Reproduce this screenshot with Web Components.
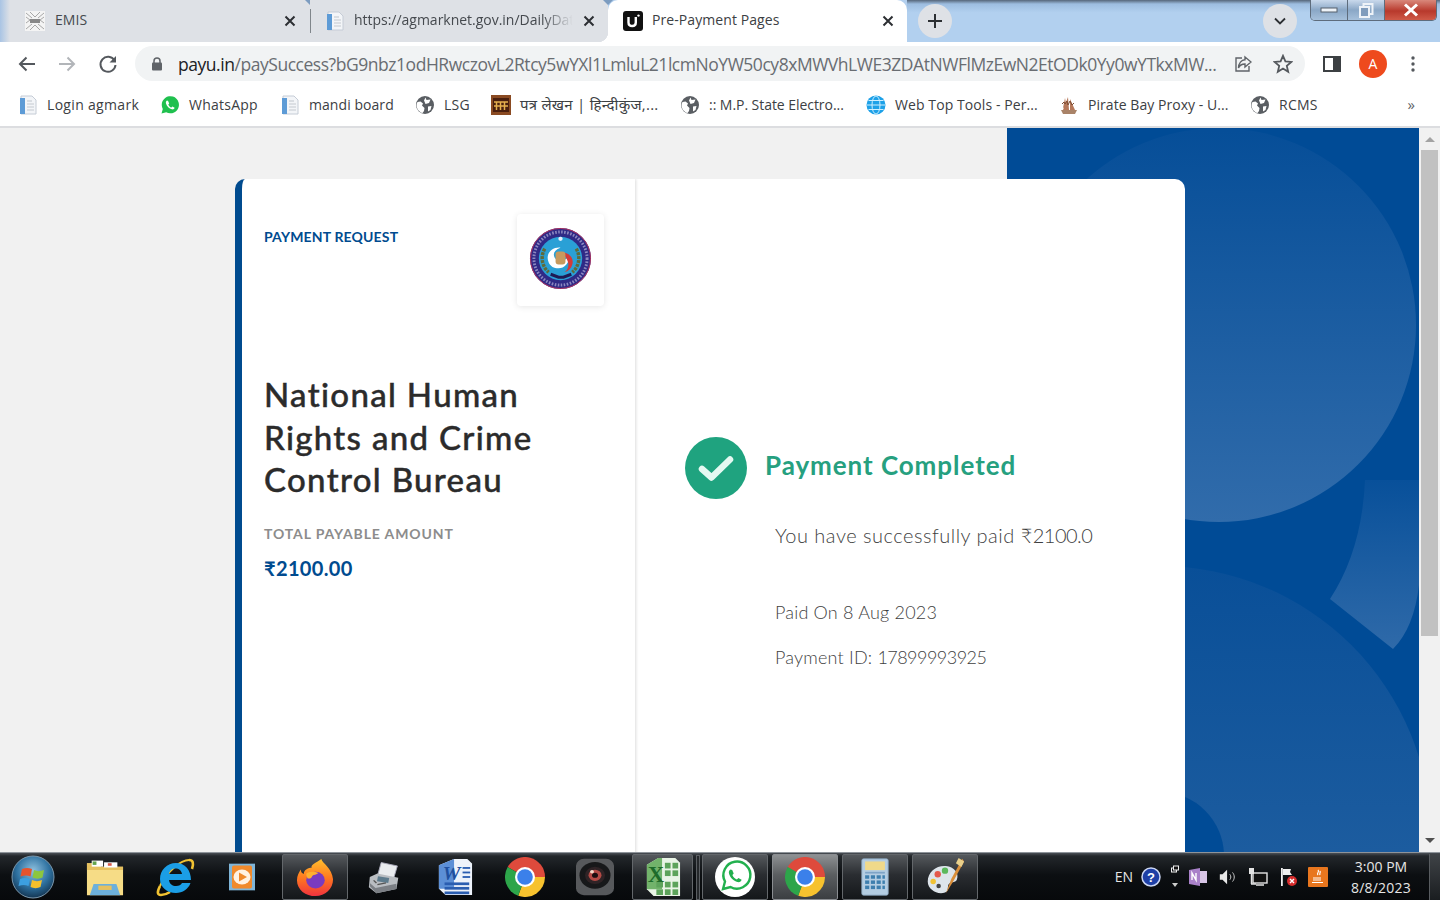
<!DOCTYPE html>
<html lang="en"><head><meta charset="utf-8"><title>Pre-Payment Pages</title>
<style>
html,body{margin:0;padding:0;width:1440px;height:900px;overflow:hidden;background:#fff}
body{display:flex;flex-direction:column;font-family:"Open Sans","Noto Sans",sans-serif}
</style></head><body>
<tab-strip>
  <browser-tab icon="emis" style="width:310px">EMIS</browser-tab>
  <browser-tab icon="doc" sep fade style="width:298px">https://agmarknet.gov.in/DailyData</browser-tab>
  <browser-tab icon="payu" active style="width:299px">Pre-Payment Pages</browser-tab>
</tab-strip>
<nav-bar url-host="payu.in" url-rest="/paySuccess?bG9nbz1odHRwczovL2Rtcy5wYXl1LmluL21lcmNoYW50cy8xMWVhLWE3ZDAtNWFlMzEwN2EtODk0Yy0wYTkxMW..."></nav-bar>
<bookmark-bar>
  <book-mark icon="doc" w="142" style="letter-spacing:.32px">Login agmark</book-mark>
  <book-mark icon="wa" w="120">WhatsApp</book-mark>
  <book-mark icon="doc" w="135" style="letter-spacing:.06px">mandi board</book-mark>
  <book-mark icon="globe" w="76">LSG</book-mark>
  <book-mark icon="hindi" w="189" big>पत्र लेखन | हिन्दीकुंज,...</book-mark>
  <book-mark icon="globe" w="186" style="letter-spacing:-.05px">:: M.P. State Electro...</book-mark>
  <book-mark icon="ball" w="193" style="letter-spacing:.09px">Web Top Tools - Per...</book-mark>
  <book-mark icon="ship" w="191" style="letter-spacing:.05px">Pirate Bay Proxy - U...</book-mark>
  <book-mark icon="globe" w="90">RCMS</book-mark>
</bookmark-bar>
<page-view>
  <pay-card>
    <summary-panel slot="left" merchant="National Human Rights and Crime Control Bureau" amount="₹2100.00"></summary-panel>
    <status-panel slot="right" paid="2100.0" date="8 Aug 2023" pid="17899993925"></status-panel>
  </pay-card>
</page-view>
<task-bar></task-bar>
<script>
const ICONS={
emis:`<svg viewBox="0 0 20 20"><rect width="20" height="20" fill="#f4f4f4"/><path d="M1 2l6 5M19 2l-6 5M1 18l6-5M19 18l-6-5M1 6l4 3-4 3M19 6l-4 3 4 3M5 1l5 5 5-5M5 19l5-5 5 5" stroke="#a8a8a8" fill="none" stroke-width="1"/><rect x="5" y="8" width="10" height="4" fill="#888"/></svg>`,
doc:`<svg viewBox="0 0 20 20"><path d="M3 1h11l4 4v14H3z" fill="#f3f5f8" stroke="#c5ccd6"/><rect x="2" y="3" width="5" height="16" fill="#5d9bd6"/><path d="M9 9h7M9 12h7M9 15h7" stroke="#c4c9cf"/><rect x="9" y="5" width="5" height="2" fill="#d9dde2"/></svg>`,
payu:`<svg viewBox="0 0 20 20"><rect width="20" height="20" rx="3" fill="#111"/><path d="M5.500 6v5.500c0 2.500 1.600 3.500 3.800 3.500s3.500-1 3.500-3.500V6" fill="none" stroke="#fff" stroke-width="2.400"/><circle cx="15.500" cy="4.600" r="1.200" fill="#fff"/></svg>`,
wa:`<svg viewBox="0 0 20 20"><path d="M1.500 18.500l1.300-4.600A8.600 8.600 0 1 1 6.200 17.300z" fill="#1fc04e"/><path d="M7 5.600c-.9.400-1.400 1.600-1 3 .8 2.800 3.200 5 5.800 5.700 1.500.4 2.500-.4 2.800-1.500l-2.200-1.300-1 1c-1.300-.4-2.600-1.700-3.100-3.100l.9-1-1.100-2.400z" fill="#fff"/></svg>`,
globe:`<svg viewBox="0 0 20 20"><circle cx="10" cy="10" r="9" fill="#5a5e63"/><path d="M2.500 7l3-.5 2.500 2-1 2 2.500 2.500-.5 3-1.500 2C4.500 17.500 1.500 14 1.500 10c0-1 .4-2 1-3zM10.500 2.500l1 2.500 4-.5-1.500 3.500-3.500 1L9 5.500zM13 11.500l3.500-.5-1 4-2.500 1.500z" fill="#fff"/></svg>`,
hindi:`<svg viewBox="0 0 20 20"><rect width="20" height="20" fill="#8a4a22"/><rect x="2" y="3" width="16" height="14" fill="#4a1f0e"/><path d="M3 7h14M5.500 7v8M9.500 7v8M13.500 7v8M3 11h14" stroke="#e6b04e" stroke-width="1.500"/></svg>`,
ball:`<svg viewBox="0 0 20 20"><circle cx="10" cy="10" r="9.500" fill="#1da1e8"/><g fill="none" stroke="#cfefff"><ellipse cx="10" cy="10" rx="4" ry="9"/><path d="M1 10h18M2.500 5.500h15M2.500 14.500h15"/></g></svg>`,
ship:`<svg viewBox="0 0 20 20"><path d="M2 15h16l-2 4H4z" fill="#a98368"/><path d="M9 2l1 13H4zM11 4l5 11h-5zM6 3l1.500 8L4 13z" fill="#b6785a"/><path d="M3 9l2-2 1 2 2-3 1 4 2-4 2 4 2-2" stroke="#7f4d33" fill="none"/></svg>`,
chrome:`<svg viewBox="0 0 40 40"><path d="M20 20L2.680 10A20 20 0 0 1 40 20z" fill="#de4a3c"/><path d="M20 20H40A20 20 0 0 1 13.160 38.800z" fill="#f7c22e"/><path d="M20 20L13.160 38.800A20 20 0 0 1 2.680 10z" fill="#2da54a"/><circle cx="20" cy="20" r="10" fill="#fff"/><circle cx="20" cy="20" r="7.800" fill="#3b80ea"/></svg>`,
folder:`<svg viewBox="0 0 40 44" preserveAspectRatio="none"><path d="M1 6h12l3 4h23v33H1z" fill="#f6dc86"/><path d="M1 6h12l3 4h23v4H1z" fill="#e6c15f"/><rect x="6" y="3" width="12" height="7" fill="#fff"/><rect x="19" y="5" width="14" height="6" fill="#fff"/><rect x="7" y="4" width="4" height="4" fill="#63a24c"/><rect x="23" y="6" width="4" height="3" fill="#d65a4a"/><path d="M8 30h24l4 13H4z" fill="#6cb0dc"/><rect x="13" y="32" width="14" height="5" fill="#e6c15f"/></svg>`,
ie:`<svg viewBox="0 0 40 40"><path d="M34 3c4 0 5 3 3 9M5 29c-3 6-3 9 1 9 3 0 6-1 9-3" fill="none" stroke="#f1c232" stroke-width="2.600"/><path d="M34 3C26 3 12 14 5 29" fill="none" stroke="#f1c232" stroke-width="2"/><path d="M5 22C5 13 12 6 21 6s15 7 15 17H14c.5 4 3.500 6 7 6 3 0 5-1 6-3h8.500c-2 6-8 10-14.500 10C12 36 5 30 5 22zM14 17h13c-.5-3.500-3-5.500-6.500-5.500S14.500 13.500 14 17z" fill="#1b9ee6" fill-rule="evenodd"/></svg>`,
media:`<svg viewBox="0 0 32 36" preserveAspectRatio="none"><path d="M3 3l5 3v24l-5 3z" fill="#5a9ecb"/><path d="M29 3l-5 3v24l5 3z" fill="#5a9ecb"/><rect x="3" y="3" width="26" height="30" fill="#7fb5d8"/><rect x="6" y="5" width="20" height="26" rx="2" fill="#f08a2c"/><circle cx="16" cy="18" r="8.500" fill="#fff2e3"/><path d="M13 13l8 5-8 5z" fill="#f08a2c"/></svg>`,
firefox:`<svg viewBox="0 0 40 44" preserveAspectRatio="none"><defs><linearGradient id="ff" x1="0" y1="0" x2="0" y2="1"><stop offset="0" stop-color="#ffc02e"/><stop offset=".5" stop-color="#ff7a1f"/><stop offset="1" stop-color="#f0323f"/></linearGradient></defs><path d="M26 1c1 5 11 10 12 23 0 11-8 19-18 19S1 36 1 25c0-5 2-9 4-12 0 3 1 4 3 5 0-5 5-7 8-7-1-4 5-6 10-10z" fill="url(#ff)"/><circle cx="20" cy="25" r="9.500" fill="#7a3bc0"/><path d="M11 17c4-2 8-2 12 0-2 2-5 2-6 3s-1 4-5 3c-1-2-2-4-1-6z" fill="#ffb02e"/></svg>`,
fax:`<svg viewBox="0 0 40 40" preserveAspectRatio="none"><path d="M16 3l17 4-4 15-17-3z" fill="#e9ecef" stroke="#aab"/><path d="M4 20l8-4 22 5-2 13-21 5-8-7z" fill="#b9bdc2"/><path d="M4 31l7 8 21-5 0-6-22 5-6-6z" fill="#7b7f85"/><rect x="12" y="20" width="12" height="6" fill="#5d7b8d" transform="rotate(10 18 23)"/><path d="M8 24l3 3M12 29l9-2" stroke="#555" stroke-width="1.500"/></svg>`,
word:`<svg viewBox="0 0 38 42" preserveAspectRatio="none"><path d="M2 8L18 1h14l5 5v35H9L2 34z" fill="#edf2fa"/><path d="M2 8L18 1v33L2 34z" fill="#5c8fd6"/><rect x="8" y="27" width="26" height="3" fill="#2a5db0"/><rect x="8" y="32" width="26" height="3" fill="#2a5db0"/><rect x="8" y="37" width="26" height="3" fill="#2a5db0"/><rect x="27" y="10" width="8" height="2" fill="#2a5db0"/><rect x="27" y="15" width="8" height="2" fill="#2a5db0"/><rect x="27" y="20" width="8" height="2" fill="#2a5db0"/><text x="6" y="24" font-family="Liberation Serif" font-weight="700" font-style="italic" font-size="21" fill="#1f4f9f">W</text></svg>`,
camera:`<svg viewBox="0 0 40 44" preserveAspectRatio="none"><rect x="1" y="1" width="38" height="42" rx="8" fill="#57595c"/><circle cx="20" cy="20" r="15.500" fill="#17181a"/><circle cx="20" cy="20" r="10" fill="#2f2326"/><circle cx="20" cy="20" r="6.500" fill="#b34a45"/><circle cx="20" cy="20" r="3" fill="#1a0e10"/><circle cx="17" cy="16" r="2" fill="#f3d9c9"/></svg>`,
excel:`<svg viewBox="0 0 38 42"><path d="M2 8L14 1h18l5 5v35H9L2 34z" fill="#e9f4e6"/><path d="M2 8L14 1h4v33H2z" fill="#72b36b"/><g fill="#5da35b"><rect x="21" y="6" width="6" height="6"/><rect x="29" y="6" width="6" height="6"/><rect x="21" y="14" width="6" height="6"/><rect x="29" y="14" width="6" height="6"/><rect x="12" y="26" width="7" height="6"/><rect x="21" y="26" width="6" height="6"/><rect x="29" y="26" width="6" height="6"/><rect x="12" y="34" width="7" height="6"/><rect x="21" y="34" width="6" height="6"/><rect x="29" y="34" width="6" height="6"/></g><text x="3" y="26" font-family="Liberation Serif" font-weight="700" font-size="24" fill="#1d6b2a">X</text></svg>`,
whats:`<svg viewBox="0 0 40 40"><circle cx="20" cy="20" r="20" fill="#fff"/><path d="M8 32l2-7.500A13.500 13.500 0 1 1 15.500 30z" fill="none" stroke="#22b04e" stroke-width="2.400"/><path d="M15.500 12.500c-1.500.7-2 2.500-1.400 4.600 1.200 3.700 4.500 7 8.300 8 2.200.5 3.800-.6 4.200-2.300l-3.200-1.800-1.500 1.500c-1.900-.6-3.800-2.500-4.500-4.500l1.300-1.500-1.500-3.600z" fill="#22b04e"/></svg>`,
calc:`<svg viewBox="0 0 34 44" preserveAspectRatio="none"><rect x="1" y="1" width="32" height="42" rx="2" fill="#b4cde2" stroke="#8ba7bf"/><rect x="5" y="4" width="24" height="10" fill="#f0d98a"/><rect x="5" y="16" width="24" height="2" fill="#7fa4c6"/><g fill="#3e7fae"><rect x="5" y="20" width="5" height="4"/><rect x="12" y="20" width="5" height="4"/><rect x="19" y="20" width="5" height="4"/><rect x="26" y="20" width="3" height="4"/><rect x="5" y="26" width="5" height="4"/><rect x="12" y="26" width="5" height="4"/><rect x="19" y="26" width="5" height="4"/><rect x="26" y="26" width="3" height="4"/><rect x="5" y="32" width="5" height="4"/><rect x="12" y="32" width="5" height="4"/><rect x="19" y="32" width="5" height="4"/><rect x="26" y="32" width="3" height="4"/></g></svg>`,
paint:`<svg viewBox="0 0 44 44"><path d="M3 27C3 16 13 9 23 10c9 1 15 8 12 15-2 4-7 2-9 5-2 4 1 7-4 9-8 3-19-3-19-12z" fill="#dde4ea"/><circle cx="14" cy="19" r="3.500" fill="#e45a4c"/><circle cx="22" cy="15" r="3.500" fill="#5cb85c"/><circle cx="9" cy="27" r="3" fill="#f1c232"/><circle cx="15" cy="32" r="2.500" fill="#444"/><path d="M41 2L29 24l-6 16 8-13L43 5z" fill="#d98e3a"/><path d="M37 1l6 4-3 6-6-4z" fill="#e9d08b"/></svg>`,
orb:`<svg viewBox="0 0 44 44"><defs><radialGradient id="o" cx=".5" cy=".35" r=".7"><stop offset="0" stop-color="#8fc1df"/><stop offset=".55" stop-color="#2f72a1"/><stop offset="1" stop-color="#0e2a44"/></radialGradient></defs><circle cx="22" cy="22" r="21" fill="url(#o)" stroke="#7c98ad"/><path d="M11 14c3.500-1.500 6.500-1.500 10 0l-1.500 7.500c-3-1.500-6-1.500-10 0z" fill="#e5532d"/><path d="M23 15c3 1.500 6 1.500 10 0l-1.500 7.500c-3 1.500-7 1.500-10 0z" fill="#8cc63f"/><path d="M9 24c3-1.500 6-1.500 10 0l-1.500 7c-3-1.500-6-1.500-10 0z" fill="#3c9fe0"/><path d="M21 25c3 1.500 7 1.500 10 0l-1.500 7c-3 1.500-7 1.500-10 0z" fill="#f6c02c"/></svg>`,
help:`<svg viewBox="0 0 20 20"><circle cx="10" cy="10" r="9" fill="#1e3fa6" stroke="#cbd6f3" stroke-width="1.500"/><text x="10" y="15" text-anchor="middle" font-family="Liberation Sans" font-weight="700" font-size="13" fill="#fff">?</text></svg>`,
updown:`<svg viewBox="0 0 10 24"><rect x="1.500" y="3" width="5" height="4" fill="none" stroke="#eee"/><rect x="3.500" y="1" width="5" height="4" fill="#111" stroke="#eee"/><path d="M2 18h6l-3 4z" fill="#ccc"/></svg>`,
onenote:`<svg viewBox="0 0 20 20"><path d="M1 3l11-2v18L1 17z" fill="#a981c9"/><rect x="12" y="4" width="7" height="12" fill="#d8c5e6"/><path d="M4 13V6l4 7V6" stroke="#fff" fill="none" stroke-width="1.400"/></svg>`,
vol:`<svg viewBox="0 0 22 20"><path d="M2 7h3l5-5v16l-5-5H2z" fill="#e8e8e8"/><path d="M13 7c1.500 2 1.500 4 0 6M16 5c2.500 3 2.500 7 0 10" fill="none" stroke="#ddd"/></svg>`,
net:`<svg viewBox="0 0 20 20"><rect x="5" y="6" width="14" height="10" fill="#111" stroke="#e4e4e4" stroke-width="1.400"/><rect x="1" y="1" width="5" height="6" fill="#e4e4e4"/><path d="M3.500 7v10M8 18h8M3 17h5" stroke="#e4e4e4" stroke-width="1.500"/></svg>`,
flag:`<svg viewBox="0 0 20 20"><rect x="3" y="1" width="1.800" height="18" fill="#eee"/><path d="M5 2h8l-1 3 2 3H5z" fill="#eee"/><circle cx="14" cy="14" r="5" fill="#d62c2c"/><path d="M12 12l4 4M16 12l-4 4" stroke="#fff" stroke-width="1.400"/></svg>`,
java:`<svg viewBox="0 0 20 20"><rect width="20" height="20" rx="1" fill="#e8761e"/><path d="M10 3c2 2-2 3 0 5M12 4c1 2-1 2 0 4M5 11h8M5 13h8M4 15.500h11" stroke="#fff" fill="none" stroke-width="1.200"/></svg>`
};
function def(name,css,html,init){
  customElements.define(name,class extends HTMLElement{
    connectedCallback(){
      if(this.shadowRoot)return;
      const r=this.attachShadow({mode:'open'});
      r.innerHTML=`<style>${css}</style>`+(typeof html==='function'?html(this):html);
      if(init)init(this,r);
    }
  });
}
const X=`<svg width="12" height="12" viewBox="0 0 12 12"><path d="M1.500 1.500l9 9M10.500 1.500l-9 9" stroke="#2c2f33" stroke-width="2"/></svg>`;

def('tab-strip',`
:host{display:flex;height:42px;flex:none;position:relative;background:linear-gradient(90deg,#a7c8ea 0,#b4d0ee 60%,#a9c9ec 100%)}
.tabs{display:flex}
.rest{flex:1;display:flex;align-items:center;padding:0 0 0 11px;position:relative;background:linear-gradient(180deg,#56667a 0,#9dbde0 4px,#b2d0ef 30%)}
.c{width:34px;height:34px;border-radius:50%;background:#dee1e6;display:flex;align-items:center;justify-content:center;margin-top:-1px}
.sp{flex:1}
.dd{margin-right:13px}
win-controls{align-self:flex-start;margin-right:3px}
`,`<div class="tabs"><slot></slot></div><div class="rest">
<div class="c"><svg width="16" height="16" viewBox="0 0 16 16"><path d="M8 1v14M1 8h14" stroke="#2c2f33" stroke-width="2"/></svg></div>
<div class="sp"></div>
<div class="c dd"><svg width="12" height="8" viewBox="0 0 12 8"><path d="M1 1.500l5 5 5-5" stroke="#2c2f33" stroke-width="1.800" fill="none"/></svg></div>
<win-controls></win-controls></div>`);

def('win-controls',`
:host{display:flex;width:127px;height:21px;border:1px solid #5e6c7c;border-top:0;border-radius:0 0 5px 5px;overflow:hidden;box-sizing:border-box}
div{display:flex;align-items:center;justify-content:center;height:100%}
.a{width:36px;background:linear-gradient(#c9d9ec,#8aa7c6 50%,#a6c0db)}
.b{width:36px;background:linear-gradient(#c9d9ec,#8aa7c6 50%,#a6c0db);border-left:1px solid #5e6c7c;border-right:1px solid #5e6c7c}
.c{flex:1;background:linear-gradient(#d9887b,#b8392c 55%,#cf5a48)}
`,`<div class="a"><svg width="18" height="6"><rect x="1" y="1" width="16" height="4" fill="#eef3f8" stroke="#56606c"/></svg></div>
<div class="b"><svg width="16" height="15" viewBox="0 0 16 15"><rect x="5.500" y="1" width="9" height="10" fill="none" stroke="#eef3f8" stroke-width="2"/><rect x="2" y="4" width="9" height="10" fill="#7f9cbc" stroke="#eef3f8" stroke-width="2"/></svg></div>
<div class="c"><svg width="18" height="14" viewBox="0 0 18 14"><path d="M3 1.500l12 11M15 1.500l-12 11" stroke="#fff" stroke-width="3"/></svg></div>`);

def('browser-tab',`
:host{display:flex;align-items:center;height:42px;box-sizing:border-box;background:#dee1e6;position:relative;font-size:14px;color:#45494e;flex:none}
:host([active]){background:#fff;border-radius:10px 10px 0 0;color:#3c4043}
:host([active])::after{content:"";position:absolute;right:-10px;bottom:0;width:10px;height:10px;background:radial-gradient(circle at 100% 0,transparent 10px,#fff 10.500px)}
:host([active])::before{content:"";position:absolute;left:-10px;bottom:0;width:10px;height:10px;background:radial-gradient(circle at 0 0,#dee1e6 10px,#fff 10.500px)}
.ic{width:20px;height:20px;margin-left:14px;margin-right:9px;flex:none}
:host([active]) .ic{margin-left:15px}
.ic svg{display:block;width:20px;height:20px}
.t{flex:1;white-space:nowrap;overflow:hidden;letter-spacing:.08px;padding-bottom:3px}
:host([fade]) .t{-webkit-mask-image:linear-gradient(90deg,#000 85%,transparent 99%);mask-image:linear-gradient(90deg,#000 85%,transparent 99%);letter-spacing:-.02px}
.x{display:flex;width:12px;height:12px;margin:0 13px 0 8px;flex:none}
:host(:first-child) .x{margin-right:14px}
:host(:first-child) .ic{margin-left:25px;margin-right:10px}
.sep{width:1px;height:24px;background:#80868b;flex:none}
.notch{position:absolute;right:-5px;top:0;width:0;height:0;border:5px solid transparent;border-top:5px solid #7c9cc0}
:host(:first-child) .edge{position:absolute;left:0;top:0;bottom:0;width:10px;background:linear-gradient(90deg,#a9c4e4,#dee1e6)}
`,h=>`<span class="edge"></span>${h.hasAttribute('sep')?'<span class="sep"></span>':''}<span class="ic">${ICONS[h.getAttribute('icon')]}</span><span class="t"><slot></slot></span><span class="x">${X}</span>${h.hasAttribute('active')?'':'<span class="notch"></span>'}`);

def('nav-bar',`
:host{display:flex;align-items:center;height:43px;background:#fff;flex:none;box-sizing:border-box}
.b{display:flex;align-items:center;justify-content:center;width:40px;flex:none}
.om{width:1170px;height:35px;margin-left:7px;flex:none;border-radius:18px;background:#f1f3f4;display:flex;align-items:center;box-sizing:border-box;padding-left:16px}
.u{width:1042px;flex:none;margin-left:15px;font-size:17.500px;white-space:nowrap;overflow:hidden;color:#696d72;letter-spacing:-.46px}
.u b{font-weight:400;color:#202124}
.s{margin-left:14px}.st{margin-left:21px}
.av{width:28px;height:28px;border-radius:50%;background:#ee4a1d;color:#fff;display:flex;align-items:center;justify-content:center;font-size:14px;font-family:"Open Sans",sans-serif;margin-left:7px;flex:none}
`,h=>`<span class="b" style="margin-left:7px"><svg width="20" height="20" viewBox="0 0 20 20"><path d="M18 10H3M9.500 3.500L3 10l6.500 6.500" fill="none" stroke="#54585d" stroke-width="2"/></svg></span>
<span class="b"><svg width="20" height="20" viewBox="0 0 20 20"><path d="M2 10h15M10.500 3.500L17 10l-6.500 6.500" fill="none" stroke="#b2b5b9" stroke-width="2"/></svg></span>
<span class="b" style="margin-left:1px"><svg width="20" height="20" viewBox="0 0 20 20"><path d="M16.500 6.500A7.500 7.500 0 1 0 17.500 11" fill="none" stroke="#54585d" stroke-width="2"/><path d="M18 2v6.500h-6.500z" fill="#54585d"/></svg></span>
<div class="om"><svg width="12" height="14" viewBox="0 0 12 14" style="flex:none"><rect x="1" y="5.500" width="10" height="8" rx="1" fill="#5f6368"/><path d="M3 6V4a3 3 0 0 1 6 0v2" fill="none" stroke="#5f6368" stroke-width="1.500"/></svg>
<span class="u"><b>${h.getAttribute('url-host')}</b>${h.getAttribute('url-rest')}</span>
<svg class="s" width="18" height="18" viewBox="0 0 18 18" style="flex:none"><path d="M8 3H2v13h13v-5" fill="none" stroke="#5f6368" stroke-width="1.400"/><path d="M11 2l6 5-6 5V9C7 9 5.500 10.500 4.500 13c0-5 3-8 6.500-8.200z" fill="#f1f3f4" stroke="#5f6368" stroke-width="1.400"/></svg>
<svg class="st" width="20" height="20" viewBox="0 0 20 20" style="flex:none"><path d="M10 1.800l2.400 5.600 6 .5-4.600 4 1.400 5.900-5.200-3.200-5.200 3.200 1.400-5.900-4.600-4 6-.5z" fill="none" stroke="#54585d" stroke-width="1.800"/></svg></div>
<span class="b" style="margin-left:7px"><svg width="18" height="16" viewBox="0 0 18 16"><rect x="1" y="1" width="16" height="14" fill="none" stroke="#3c4043" stroke-width="2"/><rect x="10" y="1" width="7" height="14" fill="#3c4043"/></svg></span>
<span class="av">A</span>
<span class="b" style="margin-left:6px"><svg width="4" height="16" viewBox="0 0 4 16"><circle cx="2" cy="2" r="1.700" fill="#54585d"/><circle cx="2" cy="8" r="1.700" fill="#54585d"/><circle cx="2" cy="14" r="1.700" fill="#54585d"/></svg></span>`);

def('bookmark-bar',`
:host{display:flex;align-items:center;height:43px;box-sizing:border-box;background:#fff;border-bottom:2px solid #dcdde0;padding-left:18px;flex:none;padding-bottom:1px}
.m{margin-left:auto;margin-right:25px;font-size:15px;color:#5f6368;padding-bottom:3px}
`,`<slot></slot><span class="m">»</span>`);

def('book-mark',`
:host{display:flex;align-items:center;font-size:14px;color:#3c4043;white-space:nowrap;flex:none;letter-spacing:.24px;font-family:"Open Sans","Noto Sans",sans-serif}
:host([big]){font-size:15px}
.i{width:20px;height:20px;margin-right:9px;flex:none}.i svg{display:block;width:20px;height:20px}
.t{padding-bottom:2px}
`,h=>`<span class="i">${ICONS[h.getAttribute('icon')]}</span><span class="t"><slot></slot></span>`,h=>{h.style.width=h.getAttribute('w')+'px'});

def('page-view',`
:host{display:flex;flex:1;min-height:0;background:#f1f1f1;position:relative;overflow:hidden}
.view{flex:1;position:relative;overflow:hidden;padding:51px 0 0 235px}
.bg{position:absolute;left:1007px;top:0;width:412px;height:724px;display:block}
::slotted(pay-card){position:relative}
scroll-rail{flex:none}
`,`<div class="view"><svg class="bg" viewBox="1007 128 412 724"><defs>
<linearGradient id="g1" gradientUnits="userSpaceOnUse" x1="0" y1="130" x2="0" y2="522"><stop offset="0" stop-color="#064e98"/><stop offset="1" stop-color="#316cab"/></linearGradient>
<linearGradient id="g2" gradientUnits="userSpaceOnUse" x1="0" y1="566" x2="0" y2="852"><stop offset="0" stop-color="#094f98"/><stop offset="1" stop-color="#1c5c9f"/></linearGradient>
<linearGradient id="g3" gradientUnits="userSpaceOnUse" x1="0" y1="480" x2="0" y2="650"><stop offset="0" stop-color="#08509a"/><stop offset="1" stop-color="#2f6aa9"/></linearGradient></defs>
<rect x="1007" y="128" width="412" height="724" fill="#004b96"/>
<circle cx="1219" cy="325" r="197" fill="url(#g1)"/>
<circle cx="1160" cy="837" r="271" fill="url(#g2)"/>
<circle cx="1160" cy="856" r="64" fill="#004b96"/>
<path d="M1365 480H1419V585Q1414 628 1393 649L1330 599Q1362 550 1365 480Z" fill="url(#g3)"/></svg><slot></slot></div><scroll-rail></scroll-rail>`);

def('scroll-rail',`
:host{display:flex;flex-direction:column;width:21px;background:#f1f1f1;align-items:center}
.a{height:22px;display:flex;align-items:center;justify-content:center;flex:none}
.t{width:17px;height:486px;background:#c1c1c1;flex:none}
.sp{flex:1}
`,`<div class="a"><svg width="10" height="6"><path d="M0 6L5 1l5 5z" fill="#a3a3a3"/></svg></div><div class="t"></div><div class="sp"></div><div class="a"><svg width="10" height="6"><path d="M0 0l5 5 5-5z" fill="#505050"/></svg></div>`);

def('pay-card',`
:host{display:flex;width:950px;height:800px;background:#fff;border-radius:10px 10px 0 0;overflow:hidden;box-sizing:border-box;border-left:7px solid #004b8f;font-family:Lato,sans-serif}
.l{width:393px;flex:none;box-shadow:1px 0 3px rgba(0,0,0,.14);position:relative;z-index:1}
.r{flex:1}
`,`<div class="l"><slot name="left"></slot></div><div class="r"><slot name="right"></slot></div>`);

def('summary-panel',`
:host{display:block;padding:35px 0 0 22px}
.top{display:flex;justify-content:space-between;align-items:flex-start;padding-right:31px;height:92px}
.req{font-size:14px;font-weight:700;color:#004b8f;line-height:17px;margin-top:14px;letter-spacing:.16px}
.logo{width:87px;height:92px;background:#fff;border-radius:4px;box-shadow:0 1px 6px rgba(0,0,0,.1);display:flex;align-items:center;justify-content:center;padding:0 1px 4px 0;box-sizing:border-box}
h1{margin:67px 0 0;font-size:33px;line-height:42.500px;font-weight:500;color:#2b2b2b;width:300px;letter-spacing:1.32px;-webkit-text-stroke:.45px #2b2b2b}
.tot{margin-top:24px;font-size:14px;line-height:18px;font-weight:700;color:#8c8c8c;letter-spacing:.88px}
.am{margin-top:12px;font-size:20px;line-height:26px;font-weight:700;color:#004b8f;letter-spacing:.35px;font-family:Lato,"Noto Sans",sans-serif}
`,h=>`<div class="top"><div class="req">PAYMENT REQUEST</div><div class="logo"><svg width="63" height="63" viewBox="0 0 64 64"><circle cx="32" cy="32" r="31" fill="#2f2a86"/><circle cx="32" cy="32" r="30.500" fill="none" stroke="#b2345e"/><circle cx="32" cy="32" r="22" fill="#2aa0d6"/><path d="M16 22a19 19 0 0 0 4 24M48 22a19 19 0 0 1-4 24" stroke="#5f6b3a" stroke-width="3.500" fill="none" stroke-dasharray="3 1"/><path d="M20 36c-4-9 4-16 12-15-6 2-8 6-6 10 3 5 12 4 15-2 0 8-5 13-11 13-5 0-8-2-10-6z" fill="#fff"/><path d="M34 26c7 0 12 6 10 12-1 4-4 7-8 8 4-3 5-8 3-12-1-3-3-5-5-8z" fill="#d33a3a"/><rect x="27" y="25" width="10" height="13" rx="3" fill="#c79a5e"/><path d="M22 48l8 3h5l8-3" stroke="#1f1b55" stroke-width="3" fill="none"/><circle cx="32" cy="12" r="2.200" fill="#e6eefc"/><circle cx="32" cy="32" r="27" fill="none" stroke="#d8d5f0" stroke-opacity=".55" stroke-width="3" stroke-dasharray="1.600 1.500"/></svg></div></div>
<h1>${h.getAttribute('merchant')}</h1><div class="tot">TOTAL PAYABLE AMOUNT</div><div class="am">${h.getAttribute('amount')}</div>`);

def('status-panel',`
:host{display:block;padding:258px 0 0 50px}
.h{display:flex;align-items:flex-start}
.ck{width:62px;height:62px;flex:none}
h2{margin:9px 0 0 18px;font-size:26px;line-height:38px;font-weight:700;color:#26a07f;letter-spacing:.94px;white-space:nowrap}
.b{padding-left:90px;color:#3f3f3f;font-weight:300;font-family:Lato,"Noto Sans",sans-serif}
.p{font-size:20px;line-height:28px;margin-top:22px;letter-spacing:.5px}
.p i{font-style:normal;letter-spacing:-.5px}
.q{font-size:18px;line-height:24px;letter-spacing:.2px}
.q i{font-style:normal;letter-spacing:-.53px}
.q1{margin-top:51px}.q2{margin-top:21px}
`,h=>`<div class="h"><svg class="ck" viewBox="0 0 62 62"><circle cx="31" cy="31" r="31" fill="#1fa37f"/><path d="M17 32l9.500 8.500L45 22.500" fill="none" stroke="#e4f8f1" stroke-width="6.500" stroke-linecap="round" stroke-linejoin="round"/></svg><h2>Payment Completed</h2></div>
<div class="b"><div class="p">You have successfully paid ₹<i>${h.getAttribute('paid')}</i></div><div class="q q1">Paid On ${h.getAttribute('date')}</div><div class="q q2">Payment ID: <i>${h.getAttribute('pid')}</i></div></div>`);

def('task-btn',`
:host{display:flex;width:70px;height:48px;align-items:center;justify-content:center;flex:none;box-sizing:border-box;padding:1px 2px 0;position:relative}
:host([narrow]){padding-right:7px}
:host([narrow])::after{content:"";position:absolute;right:0;top:2px;bottom:1px;width:4px;border:1px solid #5a5e62;box-sizing:border-box;background:#25282b}
.in{width:100%;height:46px;display:flex;align-items:center;justify-content:center;border:1px solid transparent;box-sizing:border-box;border-radius:2px}
:host([on]) .in{border-color:#63676b;background:linear-gradient(180deg,#55595d 0,#2a2d31 45%,#14171a 100%)}
:host([hot]) .in{border-color:#8a8d91;background:linear-gradient(180deg,#8e9193 0,#5b5e61 45%,#3b3e41 100%)}
svg{display:block}
`,h=>{const s=h.getAttribute('s')||'40,40';const[a,b]=s.split(',');return `<div class="in">${ICONS[h.getAttribute('icon')].replace('<svg',`<svg width="${a}" height="${b}"`)}</div>`});

def('tray-ic',`
:host{display:flex;align-items:center;justify-content:center;width:30px;flex:none}svg{display:block}
`,h=>{const s=h.getAttribute('s')||'20,20';const[a,b]=s.split(',');return ICONS[h.getAttribute('icon')].replace('<svg',`<svg width="${a}" height="${b}"`)});

def('task-bar',`
:host{display:flex;height:48px;flex:none;box-sizing:border-box;align-items:center;background:linear-gradient(180deg,#4b5056 0,#23272b 3px,#0c0f12 22px,#07090b 100%);border-top:1px solid #8e949a;position:relative;color:#e6e6e6;font-family:"Open Sans",sans-serif}
.st{width:70px;display:flex;justify-content:center;flex:none;padding-right:4px;box-sizing:border-box}
.sp{flex:1}
.en{font-size:14px;margin-right:3px}
.ck{width:88px;margin-left:4px;text-align:center;font-size:14px;line-height:21px;flex:none;padding-top:1px;box-sizing:border-box;white-space:nowrap}
.ck span{letter-spacing:.2px}
.sd{width:10px;flex:none;height:46px;margin-left:4px;border-left:1px solid #585c60;background:linear-gradient(#3f4347,#1a1d20)}
`,`<div class="st">${ICONS.orb.replace('<svg','<svg width="44" height="44"')}</div>
<task-btn icon="folder" s="38,38"></task-btn><task-btn icon="ie" s="40,40"></task-btn><task-btn icon="media" s="32,32" style="padding-right:8px"></task-btn><task-btn icon="firefox" on s="39,39"></task-btn><task-btn icon="fax" s="38,34"></task-btn><task-btn icon="word" s="36,38"></task-btn><task-btn icon="chrome"></task-btn><task-btn icon="camera" s="40,38"></task-btn><task-btn icon="excel" on narrow s="36,40"></task-btn><task-btn icon="whats" on></task-btn><task-btn icon="chrome" hot></task-btn><task-btn icon="calc" on s="28,38"></task-btn><task-btn icon="paint" on></task-btn>
<div class="sp"></div>
<span class="en">EN</span><tray-ic icon="help"></tray-ic><tray-ic icon="updown" s="10,24" style="width:17px"></tray-ic><tray-ic icon="onenote"></tray-ic><tray-ic icon="vol"></tray-ic><tray-ic icon="net"></tray-ic><tray-ic icon="flag"></tray-ic><tray-ic icon="java"></tray-ic>
<div class="ck">3:00 PM<br><span>8/8/2023</span></div><div class="sd"></div>`);
</script>
</body></html>
